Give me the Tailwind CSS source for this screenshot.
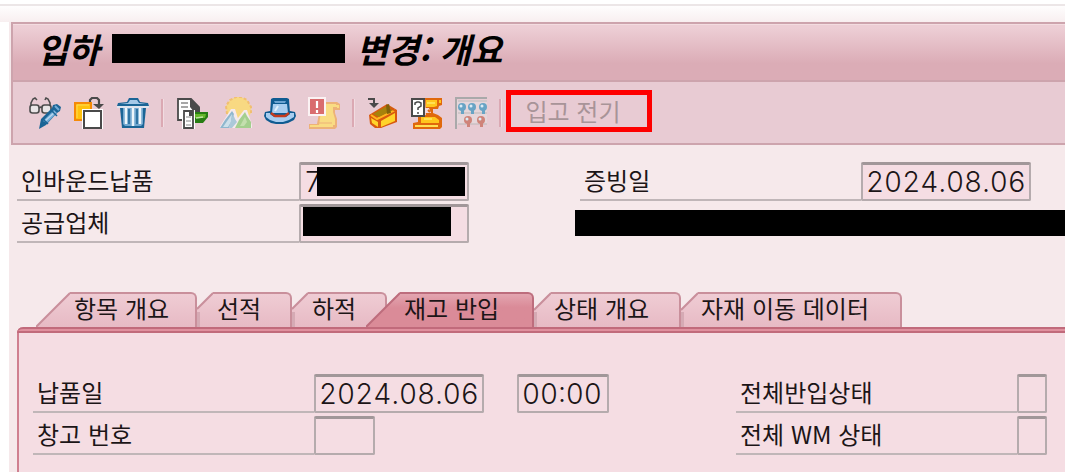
<!DOCTYPE html>
<html lang="ko">
<head>
    <meta charset="UTF-8">
    <meta name="viewport" content="width=device-width, initial-scale=1.0">
    <title>입하 변경: 개요</title>
    <script src="https://cdn.jsdelivr.net/npm/@tailwindcss/browser@4"></script>
</head>
<body class="min-h-screen overflow-x-hidden bg-white pl-[9px] font-['Noto_Sans_CJK_KR',sans-serif] text-2xl text-[#1c1517]">

<!-- Shared tab gradients -->
<svg class="absolute h-0 w-0" aria-hidden="true">
    <defs>
        <linearGradient id="tab" gradientUnits="userSpaceOnUse" x1="0" y1="2" x2="0" y2="35"><stop stop-color="#efccd4"/><stop offset="1" stop-color="#e7bac4"/></linearGradient>
        <linearGradient id="tab-active" gradientUnits="userSpaceOnUse" x1="0" y1="2" x2="0" y2="16"><stop stop-color="#e3a5b0"/><stop offset="1" stop-color="#da8b98"/></linearGradient>
    </defs>
</svg>

<div class="flex min-h-screen flex-col bg-[#f6e9eb]">

    <!-- Window edge -->
    <div class="-ml-[9px] h-[22px] border-t-4 border-white bg-linear-to-b from-white to-[#f8eff0]">
        <div class="h-[2px] bg-[#ece6e7]"></div>
    </div>

    <!-- Title -->
    <header class="ml-[2px] border-2 border-r-0 border-[#cda4ad]">
        <div class="flex h-14 items-center border-t border-[#f3dde1] bg-linear-to-b from-[#edced5] from-5% to-[#dbacb6] to-70% pb-2 pl-6">
            <h1 class="flex items-center text-[34px] leading-8 font-bold italic text-black">
                <span>입하</span>
                <span class="mx-3 h-[29px] w-[233px] bg-black"></span>
                <span>변경: 개요</span>
            </h1>
        </div>

        <!-- Toolbar -->
        <div class="flex h-[63px] items-center gap-3 border-t-2 border-[#cda4ad] bg-[#e8cbd3] pl-4">
            <button type="button" aria-label="표시/변경" class="h-8 w-8">
                <svg viewBox="0 0 32 32" class="h-8 w-8" fill="none">
                    <g stroke="#4c4c4c" stroke-width="1.6">
                        <rect x="1" y="8" width="9" height="8" rx="2.5" fill="#e9e5e6"/>
                        <rect x="13" y="8" width="9" height="8" rx="2.5" fill="#e9e5e6"/>
                        <path d="M10 11l2-1 1 1M2 9V6l2-4 2-1 2 2M21 9V6l-2-4-2-1-1 2"/>
                    </g>
                    <path d="M10 32l2-10 11-11 1-3 4-1 4 3-1 4-3 2-11 12z" fill="#1b6596"/>
                    <path d="M14 24l11-11 3 3-10 10z" fill="#73acd7"/>
                    <path d="M16 24l10-9" stroke="#b9d7ee" stroke-width="1.5"/>
                    <path d="M22 13l6 6M14 22l5 5" stroke="#1b6596" stroke-width="1.5"/>
                    <path d="M26 9l4 4" stroke="#73acd7" stroke-width="2"/>
                </svg>
            </button>
            <button type="button" aria-label="다른 문서" class="h-8 w-8">
                <svg viewBox="0 0 32 32" class="h-8 w-8" fill="none">
                    <rect x="2" y="6" width="16" height="17" fill="#ffc20e" stroke="#f58a07" stroke-width="2"/>
                    <path d="M4 21V8h12" stroke="#ffdc55"/>
                    <rect x="9" y="12" width="21" height="20" fill="#fff"/>
                    <rect x="11" y="14" width="17" height="17" fill="#fff" stroke="#4a4a4a" stroke-width="2"/>
                    <path d="M17 5V3l2-2h5l2 2v5" stroke="#4a4a4a" stroke-width="2.2"/>
                    <path d="M20 7h11l-5 5z" fill="#4a4a4a"/>
                </svg>
            </button>
            <button type="button" aria-label="삭제" class="h-8 w-8">
                <svg viewBox="0 0 32 32" class="h-8 w-8" fill="none">
                    <path d="M3 11h26l-2 20H5z" fill="#1b6596"/>
                    <path d="M6 11h20v16l-2 2H8l-2-2z" fill="#72a7cf"/>
                    <path d="M9 11v16M16 11v18M23 11v16" stroke="#eef6fb" stroke-width="2.5"/>
                    <path d="M12 12v15M20 12v15" stroke="#1b6596" stroke-width="1.5"/>
                    <path d="M0 9l1-3 9-1 2-4h9l2 4 8 1 1 3z" fill="#1b6596"/>
                    <path d="M3 7l8-1 2-3h7l2 3 7 1z" fill="#a5c9e8"/>
                    <path d="M0 10h32" stroke="#dcecf6" stroke-width="1.5"/>
                </svg>
            </button>
            <span class="h-7 w-[3px] border-l-2 border-[#dba9b3] bg-[#f1dce1]"></span>
            <button type="button" aria-label="문서 흐름" class="h-8 w-8">
                <svg viewBox="0 0 32 32" class="h-8 w-8" fill="none">
                    <path d="M2 2h13l8 8v5l-6 8H2z" fill="#fff" stroke="#4a4a4a" stroke-width="1.8"/>
                    <path d="M14 1l10 10v4h-6l-4-5z" fill="#4a4a4a"/>
                    <path d="M5 6h7M5 10h7" stroke="#8a8a8a" stroke-width="1.5"/>
                    <path d="M17 15h15v5l-5 6H17z" fill="#277d13"/>
                    <path d="M19 17h11l-1 4H19z" fill="#65b72b"/>
                    <path d="M20 21l7-1" stroke="#c2e4a3" stroke-width="1.5"/>
                    <path d="M6 13h13v19H6z" fill="#fff"/>
                    <path d="M8 14h9v17H8z" fill="#fff" stroke="#4a4a4a" stroke-width="1.8"/>
                    <path d="M13 14h4v5h-4z" fill="#4a4a4a"/>
                    <path d="M10 20h5M10 24h5M10 28h5" stroke="#8a8a8a" stroke-width="1.2"/>
                </svg>
            </button>
            <button type="button" aria-label="개요" class="h-8 w-8">
                <svg viewBox="0 0 32 32" class="h-8 w-8" fill="none">
                    <path d="M7 17L6 9l4-6 6-3h5l6 3 4 7v6l-4 6H10z" fill="#f8d982"/>
                    <path d="M7 17L6 9l4-6 6-3h5l6 3 4 7v6" stroke="#f1bf70" stroke-width="2" stroke-dasharray="3 2"/>
                    <path d="M-1 31l12-19h4l6 19z" fill="#f5eaed"/>
                    <path d="M17 31l-2-6 9-12h3l6 18z" fill="#f5eaed"/>
                    <path d="M0 31l5-8 7-9 2 3-5 14z" fill="#8fb7ce"/>
                    <path d="M3 30l9-13-1 8-3 5z" fill="#cde0ea"/>
                    <path d="M13 17l2 5 2 3-5 6H9z" fill="#abc9d9"/>
                    <path d="M15 31l4-8 6-8 2 4 4 6v6z" fill="#a4cf8e"/>
                    <path d="M20 29l5-9 2 5-3 4z" fill="#c4dfae"/>
                </svg>
            </button>
            <button type="button" aria-label="헤더" class="h-8 w-8">
                <svg viewBox="0 0 32 32" class="h-8 w-8" fill="none">
                    <path d="M1 15l5-1h20l5 1 1 4-2 4-6 3-5 1h-7l-5-1-5-3-2-4z" fill="#0f5b91"/>
                    <path d="M2 16h28v4l-5 3-6 2h-7l-6-2-4-3z" fill="#a8cdef"/>
                    <path d="M7 2l2-1h14l2 1 1 15-4 3H10l-4-3z" fill="#0f5b91"/>
                    <path d="M9 7h14l1 9H8z" fill="#a8cdef"/>
                    <path d="M10 4h12l-1 2H11z" fill="#6ba3d1"/>
                    <path d="M14 9l-3 5" stroke="#e1f0fc" stroke-width="2"/>
                    <path d="M7 16l4 3h10l4-3" stroke="#c43b1c" stroke-width="2.4"/>
                </svg>
            </button>
            <button type="button" aria-label="불완전 로그" class="h-8 w-8">
                <svg viewBox="0 0 32 32" class="h-8 w-8" fill="none">
                    <path d="M13 5h16l3 2v6h-5v3l2 6v8l-2 2H1v-5h8z" fill="#edb278"/>
                    <path d="M14 7h14v3h-3v5l2 7v6H11z" fill="#f9dc83"/>
                    <path d="M2 29h23M28 9h2v2" stroke="#f9dc83" stroke-width="2"/>
                    <path d="M11 26h13" stroke="#edb278"/>
                    <rect x="0" y="0" width="18" height="19" fill="#fbf2f3"/>
                    <rect x="2" y="2" width="14" height="15" fill="#d96c6e"/>
                    <path d="M9 4v7M9 13v3" stroke="#fff" stroke-width="2.2"/>
                </svg>
            </button>
            <span class="h-7 w-[3px] border-l-2 border-[#dba9b3] bg-[#f1dce1]"></span>
            <button type="button" aria-label="포장" class="h-8 w-8">
                <svg viewBox="0 0 32 32" class="h-8 w-8" fill="none">
                    <path d="M2 18l18-11 10 6v12l-16 6H8l-5-4z" fill="#d8590f"/>
                    <path d="M4 21l7 4v5l-6-4zM14 24l14-8v8l-14 6z" fill="#ffd42a"/>
                    <path d="M4 18l6 4 18-9" stroke="#ffb51e" stroke-width="2"/>
                    <path d="M6 17l12-7h6l2 3-14 7z" fill="#a6820c"/>
                    <path d="M19 8l3-1 2 9-4 1z" fill="#80620a"/>
                    <path d="M23 11l6 3M12 23v8" stroke="#d8590f" stroke-width="1.5"/>
                    <path d="M1 2h6v5" stroke="#4a4a4a" stroke-width="2"/>
                    <path d="M2 6h10l-5 5z" fill="#4a4a4a"/>
                </svg>
            </button>
            <button type="button" aria-label="오류 로그" class="h-8 w-8">
                <svg viewBox="0 0 32 32" class="h-8 w-8" fill="none">
                    <path d="M14 1h17v7l-3 1-1 3h-5v4l5 2 4 3v9l-2 2H2v-6l5-1v-5l8-2z" fill="#e0680c"/>
                    <path d="M15 3h11v6l-3 1h-8zM28 3h2v3h-2zM10 20h14l4 3v3H10z" fill="#ffc61c"/>
                    <path d="M4 29h23M16 6h8M13 22h8" stroke="#ffe053" stroke-width="2"/>
                    <path d="M14 11h4l2 5h-6z" fill="#f4d9dc"/>
                    <path d="M17 13l2 2" stroke="#e0680c" stroke-width="2"/>
                    <rect x="1" y="2" width="12" height="17" fill="#fff" stroke="#4a4a4a" stroke-width="2"/>
                    <path d="M4 8V6l2-1h2l2 1v3l-3 2v2M7 15v2" stroke="#4a4a4a" stroke-width="1.5"/>
                </svg>
            </button>
            <button type="button" aria-label="이동 현황" class="h-8 w-8">
                <svg viewBox="0 0 32 32" class="h-8 w-8" fill="none">
                    <path d="M2 3h30v24H2z" fill="#e6d6da"/>
                    <path d="M1 32V1h31" stroke="#a9a9aa" stroke-width="2"/>
                    <path d="M3 4h29M3 16h29M3 27h29" stroke="#bcb8b9"/>
                    <g fill="#68a4c5">
                        <circle cx="7" cy="10" r="4"/><circle cx="17" cy="10" r="4"/><circle cx="28" cy="10" r="4"/>
                        <path d="M6 13h3v4H6zM16 13h3v4h-3zM27 13h3v4h-3z"/>
                    </g>
                    <g fill="#cf8379">
                        <circle cx="13" cy="23" r="4"/><circle cx="26" cy="23" r="4"/>
                        <path d="M12 26h3v4h-3zM25 26h3v4h-3z"/>
                    </g>
                    <g fill="#dcecf4"><circle cx="6" cy="9" r="1.500"/><circle cx="16" cy="9" r="1.500"/><circle cx="27" cy="9" r="1.500"/><circle cx="12" cy="22" r="1.500"/><circle cx="25" cy="22" r="1.500"/></g>
                </svg>
            </button>
            <span class="h-7 w-[3px] border-l-2 border-[#dba9b3] bg-[#f1dce1]"></span>
            <button type="button" disabled class="-mt-1 -ml-2 h-[42px] w-[146px] border-5 border-[#fe0000] pr-3 leading-8 text-[#a89498]">입고 전기</button>
        </div>
    </header>

    <!-- Header data -->
    <section class="mt-[17px] ml-2 flex gap-x-[106px]">
        <div class="flex flex-col gap-[3px]">
            <div class="flex h-[39px]">
                <label for="delivery" class="w-[282px] border-b-2 border-[#c0b6b8] pl-1 leading-9">인바운드납품</label>
                <div class="relative">
                    <input id="delivery" value="7" readonly class="h-[39px] w-[170px] rounded-xs border-2 border-t-3 border-[#b5abad] border-t-[#a19799] bg-[#f5dde3] px-[3px] pb-px font-['Inter'] text-[28px] font-light tabular-nums">
                    <span class="absolute top-[5px] left-[18px] h-[29px] w-[148px] bg-black"></span>
                </div>
            </div>
            <div class="flex h-[39px]">
                <label for="vendor" class="w-[282px] border-b-2 border-[#c0b6b8] pl-1 leading-9">공급업체</label>
                <div class="relative">
                    <input id="vendor" readonly class="h-[39px] w-[170px] rounded-xs border-2 border-t-3 border-[#b5abad] border-t-[#a19799] bg-[#f5dde3] px-[3px]">
                    <span class="absolute top-[3px] left-1 h-[29px] w-[148px] bg-black"></span>
                </div>
            </div>
        </div>
        <div class="flex grow flex-col">
            <div class="ml-[5px] flex h-[39px]">
                <label for="docdate" class="w-[281px] border-b-2 border-[#c0b6b8] pl-1 leading-9">증빙일</label>
                <input id="docdate" value="2024.08.06" readonly class="h-[39px] w-[170px] rounded-xs border-2 border-t-3 border-[#b5abad] border-t-[#a19799] bg-[#f5dde3] px-[3px] pb-px font-['Inter'] text-[28px] font-light tabular-nums">
            </div>
            <div class="mt-[9px] h-[26px] bg-black"></div>
        </div>
    </section>

    <!-- Tabs -->
    <nav class="mt-[49px] ml-[27px] flex h-[35px] leading-7" role="tablist">
        <button type="button" role="tab" class="flex">
            <svg viewBox="0 0 34 35" class="h-[35px] w-[34px]"><path d="M0 35L34 0v35z" fill="url(#tab)"/><path d="M0 35L34 1" stroke="#c98f9b" stroke-width="2"/></svg>
            <span class="h-full w-[127px] rounded-tr-md border-t-2 border-r-2 border-[#c98f9b] bg-linear-to-b from-[#efccd4] to-[#e7bac4] pl-1 text-left whitespace-nowrap">항목 개요</span>
        </button>
        <button type="button" role="tab" class="flex">
            <svg viewBox="0 0 16 35" class="h-[35px] w-4"><path d="M0 17L16 0v35H0z" fill="url(#tab)"/><path d="M0 20h3v15H0z" fill="#d5aab4"/><path d="M0 17L16 1" stroke="#c98f9b" stroke-width="2"/></svg>
            <span class="h-full w-[79px] rounded-tr-md border-t-2 border-r-2 border-[#c98f9b] bg-linear-to-b from-[#efccd4] to-[#e7bac4] pl-1 text-left whitespace-nowrap">선적</span>
        </button>
        <button type="button" role="tab" class="flex">
            <svg viewBox="0 0 16 35" class="h-[35px] w-4"><path d="M0 17L16 0v35H0z" fill="url(#tab)"/><path d="M0 20h3v15H0z" fill="#d5aab4"/><path d="M0 17L16 1" stroke="#c98f9b" stroke-width="2"/></svg>
            <span class="h-full w-[79px] rounded-tr-md border-t-2 border-r-2 border-[#c98f9b] bg-linear-to-b from-[#efccd4] to-[#e7bac4] pl-1 text-left whitespace-nowrap">하적</span>
        </button>
        <button type="button" role="tab" aria-selected="true" class="z-10 -ml-[21px] flex">
            <svg viewBox="0 0 34 35" class="h-[35px] w-[34px]"><path d="M0 35L34 0v35z" fill="url(#tab-active)"/><path d="M0 35L34 1" stroke="#bd6d7d" stroke-width="2"/></svg>
            <span class="h-full w-[134px] rounded-tr-md border-t-2 border-r-2 border-[#bd6d7d] bg-linear-to-b from-[#e3a5b0] to-[#da8b98] to-40% pl-1 text-left whitespace-nowrap">재고 반입</span>
        </button>
        <button type="button" role="tab" class="flex">
            <svg viewBox="0 0 17 35" class="h-[35px] w-[17px]"><path d="M0 17L17 0v35H0z" fill="url(#tab)"/><path d="M0 20h3v15H0z" fill="#d5aab4"/><path d="M0 18L17 1" stroke="#c98f9b" stroke-width="2"/></svg>
            <span class="h-full w-[130px] rounded-tr-md border-t-2 border-r-2 border-[#c98f9b] bg-linear-to-b from-[#efccd4] to-[#e7bac4] pl-[3px] text-left whitespace-nowrap">상태 개요</span>
        </button>
        <button type="button" role="tab" class="flex">
            <svg viewBox="0 0 17 35" class="h-[35px] w-[17px]"><path d="M0 17L17 0v35H0z" fill="url(#tab)"/><path d="M0 20h3v15H0z" fill="#d5aab4"/><path d="M0 18L17 1" stroke="#c98f9b" stroke-width="2"/></svg>
            <span class="h-full w-[204px] rounded-tr-md border-t-2 border-r-2 border-[#c98f9b] bg-linear-to-b from-[#efccd4] to-[#e7bac4] pl-[3px] text-left whitespace-nowrap">자재 이동 데이터</span>
        </button>
    </nav>

    <!-- Tab panel -->
    <section class="ml-2 grow rounded-tl-md border-l-2 border-[#cf8090] bg-[#f5dde3]">
        <div class="-ml-[2px] h-[6px] rounded-tl-md border-y-2 border-[#c16a7b] bg-[#e0909e]"></div>
        <div class="mt-[41px] ml-[14px] flex justify-between pr-[18px]">
            <div class="flex flex-col gap-[3px]">
                <div class="flex h-[39px]">
                    <label for="shipdate" class="w-[281px] border-b-2 border-[#c0b6b8] pl-1 leading-9">납품일</label>
                    <input id="shipdate" value="2024.08.06" class="h-[39px] w-[170px] rounded-xs border-2 border-t-3 border-[#b5abad] border-t-[#a19799] bg-[#f5dde3] px-[3px] pb-px font-['Inter'] text-[28px] font-light tabular-nums">
                    <input aria-label="시간" value="00:00" class="ml-[33px] h-[39px] w-[92px] rounded-xs border-2 border-t-3 border-[#b5abad] border-t-[#a19799] bg-[#f5dde3] px-[3px] pb-px font-['Inter'] text-[28px] font-light tabular-nums">
                </div>
                <div class="flex h-[39px]">
                    <label for="warehouse" class="w-[281px] border-b-2 border-[#c0b6b8] pl-1 leading-9">창고 번호</label>
                    <input id="warehouse" class="h-[39px] w-[61px] rounded-xs border-2 border-t-3 border-[#b5abad] border-t-[#a19799] bg-[#f5dde3] px-[3px]">
                </div>
            </div>
            <div class="flex flex-col gap-[3px]">
                <div class="flex h-[39px]">
                    <label for="putaway" class="w-[281px] border-b-2 border-[#c0b6b8] pl-1 leading-9">전체반입상태</label>
                    <input id="putaway" readonly class="h-[39px] w-[30px] rounded-xs border-2 border-t-3 border-[#b5abad] border-t-[#a19799] bg-[#f5dde3] px-[3px]">
                </div>
                <div class="flex h-[39px]">
                    <label for="wm" class="w-[281px] border-b-2 border-[#c0b6b8] pl-1 leading-9">전체 WM 상태</label>
                    <input id="wm" readonly class="h-[39px] w-[30px] rounded-xs border-2 border-t-3 border-[#b5abad] border-t-[#a19799] bg-[#f5dde3] px-[3px]">
                </div>
            </div>
        </div>
    </section>
</div>

</body>
</html>
